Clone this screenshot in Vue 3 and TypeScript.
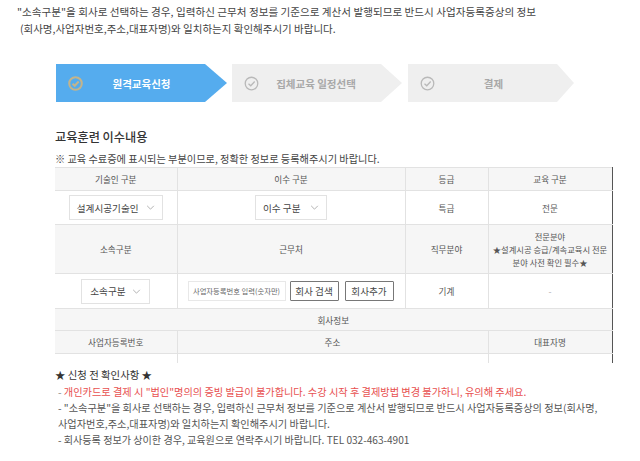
<script setup lang="ts">
interface Step { label: string; active: boolean }
const steps: Step[] = [
  { label: '원격교육신청', active: true },
  { label: '집체교육 일정선택', active: false },
  { label: '결제', active: false },
]
</script>

<template>
  <div class="page">
    <div class="intro">
      <p class="l1">"소속구분"을 회사로 선택하는 경우, 입력하신 근무처 정보를 기준으로 계산서 발행되므로 반드시 사업자등록증상의 정보</p>
      <p class="l2">(회사명,사업자번호,주소,대표자명)와 일치하는지 확인해주시기 바랍니다.</p>
    </div>

    <div class="steps">
      <div v-for="s in steps" :key="s.label" class="step" :class="{ active: s.active }">
        <svg class="check" viewBox="0 0 16 16" width="15" height="15">
          <circle cx="8" cy="8" r="6.7" fill="none" />
          <path d="M4.8 8.2 7.2 10.4 11.4 5.8" fill="none" />
        </svg>
        <span class="step-label">{{ s.label }}</span>
      </div>
    </div>

    <h2 class="title">교육훈련 이수내용</h2>
    <p class="notice">※ 교육 수료증에 표시되는 부분이므로, 정확한 정보로 등록해주시기 바랍니다.</p>

    <table class="grid">
      <colgroup>
        <col class="c1" /><col class="c2" /><col class="c3" /><col class="c4" />
      </colgroup>
      <tbody>
        <tr class="r-head">
          <th>기술인 구분</th><th>이수 구분</th><th>등급</th><th>교육 구분</th>
        </tr>
        <tr class="r-sel">
          <td>
            <div class="select s-tech"><span>설계시공기술인</span><svg class="chev" viewBox="0 0 10 6" width="9" height="5"><path d="M1 1 5 5 9 1" /></svg></div>
          </td>
          <td>
            <div class="select s-comp"><span>이수 구분</span><svg class="chev" viewBox="0 0 10 6" width="9" height="5"><path d="M1 1 5 5 9 1" /></svg></div>
          </td>
          <td>특급</td>
          <td>전문</td>
        </tr>
        <tr class="r-head2">
          <th>소속구분</th><th>근무처</th><th>직무분야</th>
          <th class="multi">전문분야<br />★설계시공 승급/계속교육시 전문<br />분야 사전 확인 필수★</th>
        </tr>
        <tr class="r-input">
          <td>
            <div class="select s-org"><span>소속구분</span><svg class="chev" viewBox="0 0 10 6" width="9" height="5"><path d="M1 1 5 5 9 1" /></svg></div>
          </td>
          <td>
            <div class="work">
              <div class="fake-input">사업자등록번호 입력(숫자만)</div>
              <button class="btn" type="button">회사 검색</button>
              <button class="btn" type="button">회사추가</button>
            </div>
          </td>
          <td>기계</td>
          <td class="dash">-</td>
        </tr>
        <tr class="r-info">
          <th colspan="4">회사정보</th>
        </tr>
        <tr class="r-head3">
          <th>사업자등록번호</th><th colspan="2">주소</th><th>대표자명</th>
        </tr>
        <tr class="r-empty">
          <td></td><td colspan="2"></td><td></td>
        </tr>
      </tbody>
    </table>

    <div class="check-list">
      <p class="check-title">★ 신청 전 확인사항 ★</p>
      <p class="red"><span class="dash-g">- </span>개인카드로 결제 시 "법인"명의의 증빙 발급이 불가합니다. 수강 시작 후 결제방법 변경 불가하니, 유의해 주세요.</p>
      <p>- "소속구분"을 회사로 선택하는 경우, 입력하신 근무처 정보를 기준으로 계산서 발행되므로 반드시 사업자등록증상의 정보(회사명,</p>
      <p class="indent">사업자번호,주소,대표자명)와 일치하는지 확인해주시기 바랍니다.</p>
      <p class="last">- 회사등록 정보가 상이한 경우, 교육원으로 연락주시기 바랍니다. TEL 032-463-4901</p>
    </div>
  </div>
</template>

<style>
html, body { margin: 0; background: #fff; }
</style>

<style scoped>
.page {
  width: 640px;
  height: 461px;
  overflow: hidden;
  box-sizing: border-box;
  font-family: "Noto Sans CJK KR", "Noto Sans", sans-serif;
  color: #444;
  font-size: 10.5px;
}
p { margin: 0; white-space: nowrap; }
.intro { padding-top: 3px; line-height: 17px; color: #444; }
.l1 { padding-left: 17px; font-size: 10.6px; }
.l2 { padding-left: 20px; font-size: 10.5px; }

.steps { display: flex; margin: 27px 0 0 56px; }
.step {
  width: 171px;
  height: 38px;
  margin-right: 5px;
  background: #efefef;
  clip-path: polygon(0 0, 149px 0, 100% 50%, 149px 100%, 0 100%);
  display: flex;
  align-items: center;
  color: #a8a8a8;
  font-weight: 700;
  font-size: 10.5px;
}
.step.active { background: #55acee; color: #fff; }
.check { margin-left: 12px; flex: none; stroke: #b9b9b9; stroke-width: 1.4; }
.step.active .check { stroke: #c3b48c; stroke-width: 2.2; }
.step-label { flex: 1; text-align: center; padding-right: 27px; }
.step:nth-child(2) { margin-right: 6px; width: 170px; }
.step:nth-child(2) .step-label { padding-right: 29px; white-space: nowrap; }
.step:nth-child(3) { width: 166px; }
.step:nth-child(3) .step-label { padding-right: 22px; }

.title {
  margin: 26px 0 0 55px;
  font-size: 12.2px;
  line-height: 18px;
  font-weight: 500;
  color: #333;
}
.notice { margin: 6px 0 0 55px; line-height: 14px; font-size: 10.2px; color: #444; }

.grid {
  margin: 1px 0 0 55px;
  width: 557px;
  table-layout: fixed;
  border-collapse: collapse;
  border-right: 1px solid #555;
  border-top: 1px solid #ddd;
  font-size: 8.6px;
  color: #555;
  text-align: center;
}
.c1 { width: 122px; }
.c2 { width: 228px; }
.c3 { width: 83px; }
.c4 { width: 124px; }
.grid th, .grid td {
  border: 1px solid #e2e2e2;
  padding: 0;
  font-weight: 400;
  text-align: center;
  vertical-align: middle;
}
.grid tr > :last-child { border-right: 1px solid #555; }
.grid tr > :first-child { border-left: none; }
.grid th { background: #f6f6f6; }
.r-head { height: 23px; }
.r-sel { height: 34px; }
.r-head2 { height: 49px; }
.r-input { height: 35px; }
.r-info { height: 22px; }
.r-head3 { height: 23px; }
.r-empty { height: 9px; }
.r-empty td { border-bottom: none; }
.grid th.multi { line-height: 13px; font-size: 8.3px; }
.dash { color: #aaa; }

.select {
  display: inline-flex;
  align-items: center;
  justify-content: space-between;
  box-sizing: border-box;
  height: 25px;
  padding: 0 7px;
  border: 1px solid #e2e2e2;
  background: #fff;
  font-size: 9.6px;
  color: #444;
  vertical-align: middle;
}
.s-tech { width: 94px; }
.s-comp { width: 72px; }
.s-org { width: 69px; padding: 0 8px; }
.chev { flex: none; }
.chev path { fill: none; stroke: #999; stroke-width: 0.9; }

.work { display: flex; align-items: center; padding-left: 10px; gap: 4px; }
.fake-input {
  box-sizing: border-box;
  width: 98px;
  height: 20px;
  line-height: 18px;
  border: 1px solid #e8e8e8;
  font-size: 7.3px;
  color: #666;
  text-align: center;
  white-space: nowrap;
}
.btn {
  box-sizing: border-box;
  height: 20px;
  width: 49px;
  padding: 0;
  border: 1px solid #777;
  background: #fff;
  border-radius: 1px;
  font-family: inherit;
  font-size: 9.6px;
  color: #444;
}
.btn + .btn { margin-left: 2px; }

.check-list { margin: 2px 0 0 55px; font-size: 10.2px; line-height: 16px; color: #555; }
.check-title { font-size: 10.4px; color: #333; line-height: 19px; }
.check-list p:not(.check-title) { padding-left: 3px; }
.check-list .indent { padding-left: 9px; }
.check-list .last { font-size: 10.1px; }
.red { color: #e8504f; }
.dash-g { color: #888; }
</style>
